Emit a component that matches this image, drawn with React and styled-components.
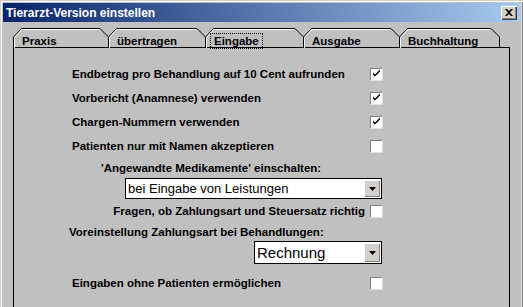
import styled, { createGlobalStyle } from 'styled-components'

const GlobalStyle = createGlobalStyle`
  body {
    margin: 0;
    background: #c0c0c0;
    font-family: "Liberation Sans", Arial, sans-serif;
  }
`

const tabs = [
  { label: 'Praxis', width: 95 },
  { label: 'übertragen', width: 97 },
  { label: 'Eingabe', width: 98, active: true },
  { label: 'Ausgabe', width: 96 },
  { label: 'Buchhaltung', width: 100 },
]

function TabShape({ width }) {
  const w = width
  return (
    <TabSvg width={w + 1} height={21} viewBox={`0 0 ${w + 1} 21`}>
      <path
        d={`M0.5 21 L0.5 10 L8.5 1.5 L${w - 8} 1.5 L${w + 0.5} 10 L${w + 0.5} 21`}
        fill="none"
        stroke="#000"
      />
      <path
        d={`M1.5 21 L1.5 10.5 L9 2.5 L${w - 8.5} 2.5`}
        fill="none"
        stroke="#fff"
      />
    </TabSvg>
  )
}

function Checkbox({ checked }) {
  return (
    <Check>
      {checked && (
        <svg width="9" height="9" viewBox="0 0 9 9">
          <path d="M1 3.5 L1 5.5 L3 7.5 L8 2.5 L8 0.5 L3 5.5 Z" fill="#000" />
        </svg>
      )}
    </Check>
  )
}

function Combo({ value, left, width, height, size }) {
  return (
    <ComboBox $left={left} $width={width} $height={height}>
      <ComboText $size={size}>{value}</ComboText>
      <DropButton>
        <svg width="7" height="4" viewBox="0 0 7 4">
          <path d="M0 0 L7 0 L3.5 4 Z" fill="#000" />
        </svg>
      </DropButton>
    </ComboBox>
  )
}

export default function App() {
  return (
    <>
      <GlobalStyle />
      <Window>
        <TitleBar>
          <Title>Tierarzt-Version einstellen</Title>
          <CloseButton>
            <svg width="8" height="7" viewBox="0 0 8 7">
              <path d="M0 0 L2 0 L4 2 L6 0 L8 0 L5 3.5 L8 7 L6 7 L4 5 L2 7 L0 7 L3 3.5 Z" fill="#000" />
            </svg>
          </CloseButton>
        </TitleBar>

        <TabStrip>
          {tabs.map((t) => (
            <Tab key={t.label} $width={t.width}>
              <TabShape width={t.width} />
              <TabLabel $active={t.active}>{t.label}</TabLabel>
            </Tab>
          ))}
        </TabStrip>

        <Panel>
          <Form>
            <Row $indent={58}>
              <Label>Endbetrag pro Behandlung auf 10 Cent aufrunden</Label>
              <Checkbox checked />
            </Row>
            <Row $indent={58}>
              <Label>Vorbericht (Anamnese) verwenden</Label>
              <Checkbox checked />
            </Row>
            <Row $indent={58}>
              <Label>Chargen-Nummern verwenden</Label>
              <Checkbox checked />
            </Row>
            <Row $indent={58}>
              <Label>Patienten nur mit Namen akzeptieren</Label>
              <Checkbox />
            </Row>
            <Heading $indent={87} $height={20}>
              'Angewandte Medikamente' einschalten:
            </Heading>
            <Combo value="bei Eingabe von Leistungen" left={111} width={257} height={21} size={13} />
            <Row $indent={0} $right>
              <Label>Fragen, ob Zahlungsart und Steuersatz richtig</Label>
              <Checkbox />
            </Row>
            <Heading $indent={55} $height={18}>
              Voreinstellung Zahlungsart bei Behandlungen:
            </Heading>
            <Combo value="Rechnung" left={240} width={128} height={23} size={15} />
            <Row $indent={58} $top={7}>
              <Label>Eingaben ohne Patienten ermöglichen</Label>
              <Checkbox />
            </Row>
          </Form>
        </Panel>
      </Window>
    </>
  )
}

const Window = styled.div`
  width: 523px;
  height: 307px;
  box-sizing: border-box;
  padding: 3px 3px 0 3px;
  display: flex;
  flex-direction: column;
  overflow: hidden;
  background: #c0c0c0;
  box-shadow: inset 1px 1px 0 #d4d0c8, inset 2px 2px 0 #ffffff, inset -1px 0 0 #808080, inset -2px 0 0 #dfdfdf;
`

const TitleBar = styled.div`
  height: 19px;
  display: flex;
  align-items: center;
  justify-content: space-between;
  padding: 0 3px 0 3px;
  background: linear-gradient(to right, #0a246a, #a6caf0);
`

const Title = styled.span`
  color: #fff;
  font-weight: 700;
  font-size: 12px;
  letter-spacing: 0;
`

const CloseButton = styled.div`
  width: 16px;
  height: 14px;
  box-sizing: border-box;
  display: flex;
  align-items: center;
  justify-content: center;
  background: #d4d0c8;
  box-shadow: inset 1px 1px 0 #fff, inset -1px -1px 0 #404040, inset -2px -2px 0 #808080;
`

const TabStrip = styled.div`
  display: flex;
  height: 20px;
  margin: 5px 0 0 10px;
`

const Tab = styled.div`
  position: relative;
  width: ${(p) => p.$width}px;
  height: 20px;
  flex: none;
`

const TabSvg = styled.svg`
  position: absolute;
  left: 0;
  top: 0;
`

const TabLabel = styled.span`
  position: relative;
  display: inline-block;
  margin: 8px 0 0 7px;
  padding: 0 2px;
  height: 12px;
  line-height: 12px;
  font-size: 11.5px;
  font-weight: 700;
  color: #000;
  outline: ${(p) => (p.$active ? '1px dotted #000' : 'none')};
  outline-offset: 1px;
`

const Panel = styled.div`
  flex: 1;
  margin-left: 10px;
  width: 497px;
  box-sizing: border-box;
  border: 1px solid #000;
  border-bottom: none;
`

const Form = styled.div`
  width: 369px;
  padding-top: 14px;
  display: flex;
  flex-direction: column;
`

const Row = styled.div`
  display: grid;
  grid-template-columns: 1fr 13px;
  align-items: center;
  column-gap: 5px;
  height: 24px;
  margin-top: ${(p) => p.$top || 0}px;
  padding-left: ${(p) => p.$indent}px;
  text-align: ${(p) => (p.$right ? 'right' : 'left')};
`

const Label = styled.span`
  font-size: 11.5px;
  font-weight: 700;
  color: #000;
  white-space: nowrap;
`

const Heading = styled.div`
  height: ${(p) => p.$height}px;
  line-height: ${(p) => p.$height}px;
  padding-left: ${(p) => p.$indent}px;
  font-size: 11.5px;
  font-weight: 700;
  color: #000;
  white-space: nowrap;
`

const Check = styled.div`
  width: 13px;
  height: 13px;
  box-sizing: border-box;
  display: flex;
  align-items: center;
  justify-content: center;
  background: #fff;
  box-shadow: inset 1px 1px 0 #808080, inset -1px -1px 0 #fff;
  border-right: 1px solid #dfdfdf;
  border-bottom: 1px solid #dfdfdf;
`

const ComboBox = styled.div`
  display: flex;
  margin-left: ${(p) => p.$left}px;
  width: ${(p) => p.$width}px;
  height: ${(p) => p.$height}px;
  box-sizing: border-box;
  border: 1px solid #000;
  background: #fff;
`

const ComboText = styled.span`
  flex: 1;
  display: flex;
  align-items: center;
  padding-left: 2px;
  font-size: ${(p) => p.$size}px;
  color: #000;
  white-space: nowrap;
`

const DropButton = styled.div`
  width: 16px;
  margin: 1px;
  display: flex;
  align-items: center;
  justify-content: center;
  background: #d4d0c8;
  box-shadow: inset 1px 1px 0 #fff, inset -1px -1px 0 #808080;
`
